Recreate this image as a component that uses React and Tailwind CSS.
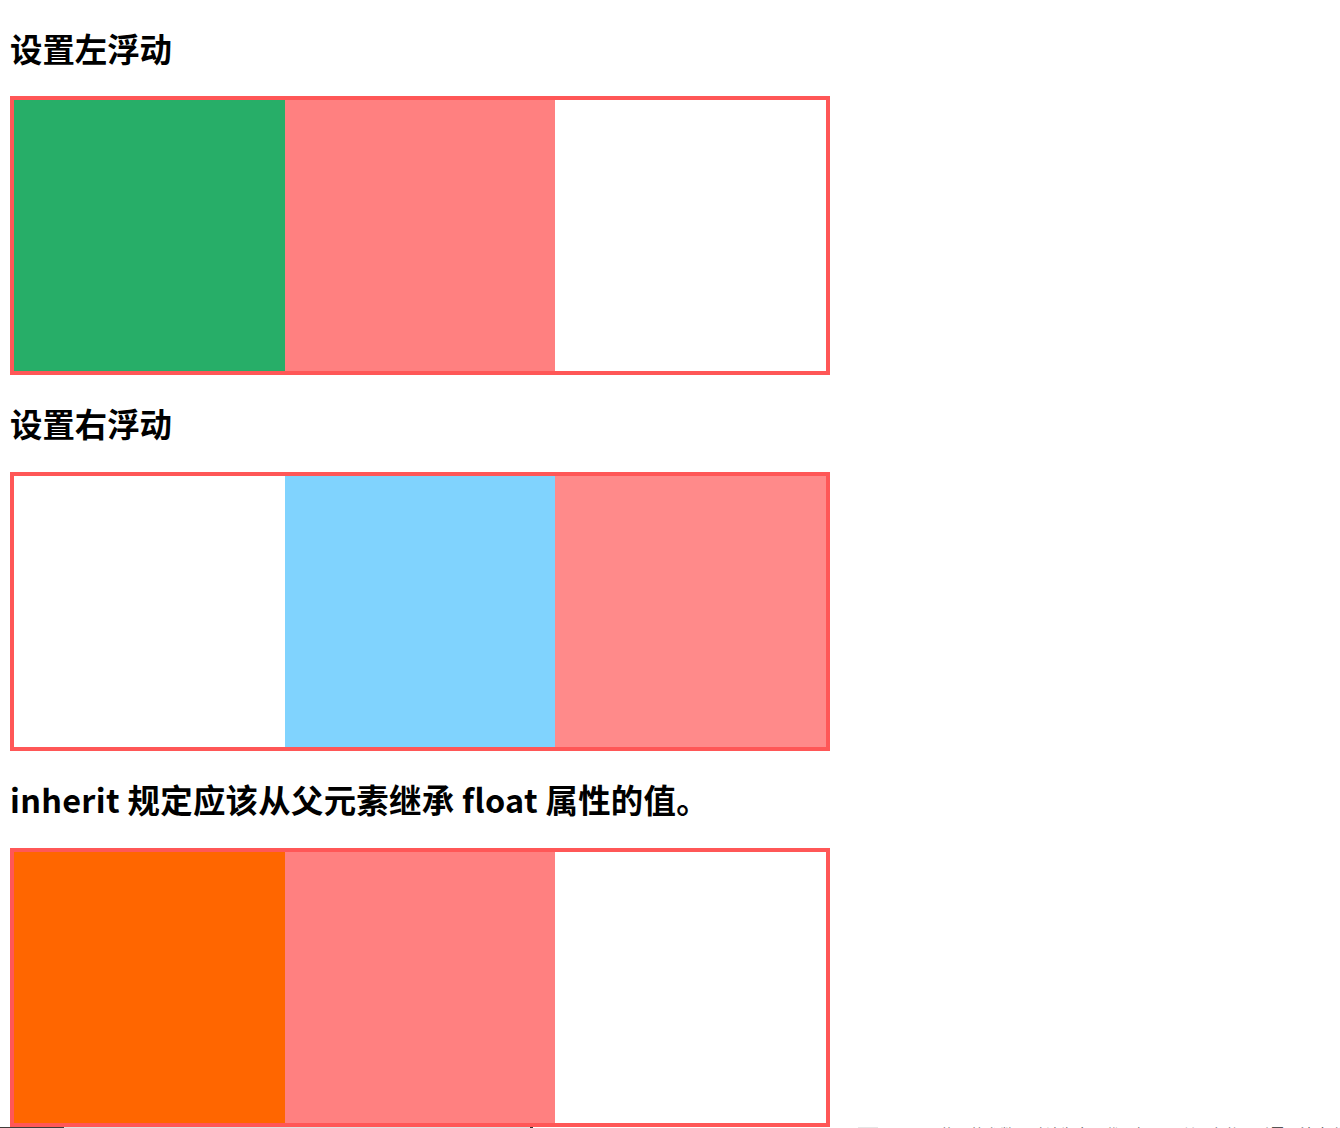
import React from "react";

const font = { fontFamily: '"Noto Sans CJK SC", "Noto Sans", sans-serif' };

function Heading({ children, h, extra = "" }) {
  return (
    <div className={`flex items-center px-[10px] ${h}`}>
      <h1 className={`text-[32.4px] font-bold leading-[42px] text-black m-0 whitespace-nowrap ${extra}`} style={font}>
        {children}
      </h1>
    </div>
  );
}

function Box({ colors }) {
  return (
    <div className="mx-[10px] w-[820px] border-4 border-[#ff5757] flex">
      {colors.map((c, i) => (
        <div key={i} className={`w-1/3 h-[270.67px] ${c}`} />
      ))}
    </div>
  );
}

export default function App() {
  return (
    <div className="w-[1340px] h-[1128px] bg-white overflow-hidden" style={font}>
      <Heading h="h-[96px]">设置左浮动</Heading>
      <Box colors={["bg-[#27ae68]", "bg-[#ff8080]", "bg-white"]} />
      <Heading h="h-[97.33px]">设置右浮动</Heading>
      <Box colors={["bg-white", "bg-[#80d3fe]", "bg-[#ff8a8a]"]} />
      <Heading h="h-[97.33px]" extra="tracking-[0.3px]">inherit 规定应该从父元素继承 float 属性的值。</Heading>
      <Box colors={["bg-[#ff6600]", "bg-[#ff8080]", "bg-white"]} />
      <div className="relative h-[2px] overflow-hidden flex items-start">
        <div className="w-[64px] h-[2px] bg-[#403c3a]" />
        <div className="w-[466px] h-[2px] bg-[#e0e0e0]" />
        <div className="w-[3px] h-[2px] bg-[#333]" />
        <div className="w-[325px] h-[2px] bg-white" />
        <div className="w-[20px] h-[1px] bg-[#e6e6e6]" />
        <div className="absolute left-[940px] top-0 whitespace-nowrap text-[15px] leading-[15px] text-[#555] -mt-[1px]">
          传入的参数，默认为空，代码如下，所以在使用时需要注意参数
        </div>
      </div>
    </div>
  );
}
